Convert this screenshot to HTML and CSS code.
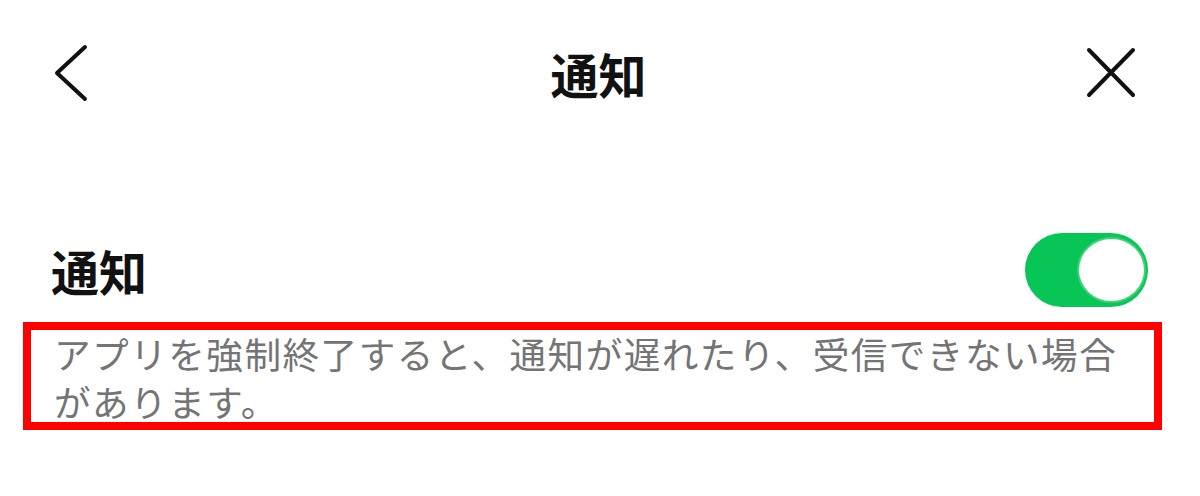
FILE: index.html
```html
<!DOCTYPE html>
<html lang="ja">
<head>
<meta charset="utf-8">
<title>通知</title>
<link rel="stylesheet" href="styles.css">
</head>
<body>
<div class="screen">
  <header class="header">
    <div class="header-left">
      <svg class="icon-back" width="34" height="60" viewBox="0 0 34 60" aria-hidden="true">
        <polyline points="31,4 3,30 31,56" fill="none" stroke="#111" stroke-width="4" stroke-linecap="round" stroke-linejoin="round"/>
      </svg>
    </div>
    <h1 class="title">通知</h1>
    <div class="header-right">
      <svg class="icon-close" width="52" height="54" viewBox="0 0 52 54" aria-hidden="true">
        <path d="M4 4 L48 49 M48 4 L4 49" fill="none" stroke="#111" stroke-width="4" stroke-linecap="round"/>
      </svg>
    </div>
  </header>
  <div class="row">
    <span class="row-label">通知</span>
    <div class="toggle"><div class="knob"></div></div>
  </div>
  <div class="note">
    <p class="note-text">アプリを強制終了すると、通知が遅れたり、受信できない場合<br>があります。</p>
  </div>
</div>
</body>
</html>
```
FILE: styles.css
```css
* { box-sizing: border-box; }
html, body { margin: 0; padding: 0; background: #fff; }
body {
  font-family: "Noto Sans CJK JP", "Noto Sans", sans-serif;
  color: #111;
  width: 1200px;
  height: 496px;
  overflow: hidden;
}
.screen { width: 1200px; }
.header {
  display: grid;
  grid-template-columns: 1fr auto 1fr;
  align-items: center;
  height: 146px;
  padding: 0 63px 0 54px;
}
.header-left { display: flex; justify-content: flex-start; }
.header-right { display: flex; justify-content: flex-end; }
.icon-back, .icon-close { display: block; }
.title {
  margin: 0;
  font-size: 48px;
  font-weight: 700;
  line-height: 1;
  position: relative;
  left: 3px;
}
.row {
  margin-top: 87px;
  height: 74px;
  display: flex;
  align-items: center;
  justify-content: space-between;
  padding: 0 52px 0 51px;
}
.row-label {
  font-size: 48px;
  font-weight: 700;
  line-height: 1;
}
.toggle {
  width: 123px;
  height: 74px;
  border-radius: 37px;
  background: #07c655;
  display: flex;
  justify-content: flex-end;
  align-items: center;
  padding-right: 2px;
}
.knob {
  width: 69px;
  height: 66px;
  border-radius: 50%;
  background: #fff;
  border: 2px solid #3fd27a;
}
.note {
  margin: 15px 0 0 23px;
  width: 1139px;
  height: 108px;
  border: 8px solid #ff0000;
  padding: 0 0 0 23px;
}
.note-text {
  margin: 0;
  font-size: 36.6px;
  letter-spacing: 1.5px;
  line-height: 48px;
  color: #747474;
  white-space: nowrap;
}
```
